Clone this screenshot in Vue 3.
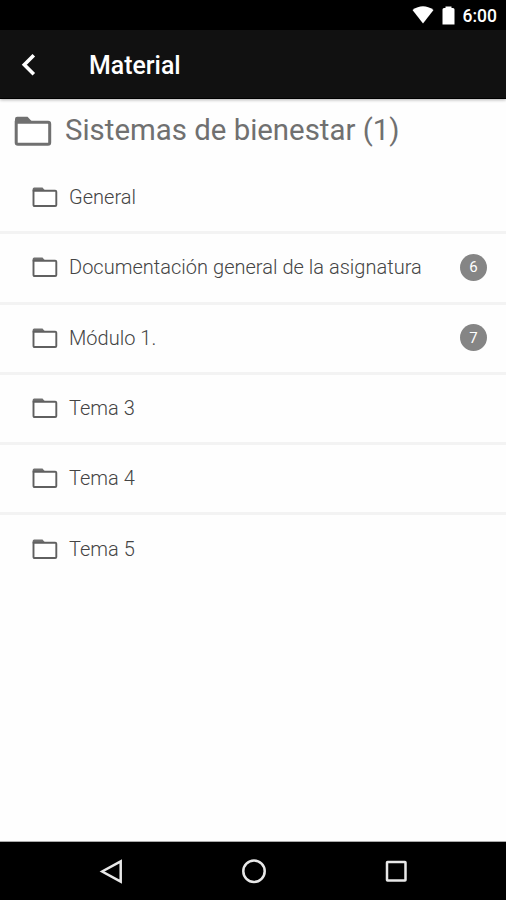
<script setup>
const rows = [
  { name: 'General' },
  { name: 'Documentación general de la asignatura', count: 6 },
  { name: 'Módulo 1.', count: 7 },
  { name: 'Tema 3' },
  { name: 'Tema 4' },
  { name: 'Tema 5' },
]
</script>

<template>
  <div class="screen">
    <div class="status">
      <svg class="wifi" viewBox="0 0 22 18"><path d="M0.5 4Q11 -3.5 21.5 4L11 17.5Z" /></svg>
      <svg class="battery" viewBox="0 0 13 19"><path d="M3.5 0.5h6v1.5h1.5q1.500 0 1.500 1.500V18.500H.5V3.500Q.5 2 2 2h1.500z" /></svg>
      <span class="time">6:00</span>
    </div>
    <header class="bar">
      <svg class="back" viewBox="0 0 16 24"><path d="M13.800 2.200L4.300 11.700L13.800 21.200" /></svg>
      <h1>Material</h1>
    </header>
    <main class="content">
      <div class="course">
        <svg class="folder-lg" viewBox="0 0 38 31"><path class="tab" d="M1 8V3Q1 .8 3.200.8H13.500L18 5.500V8z" /><path class="box" d="M2.200 6.200H34Q35.700 6.200 35.700 7.900V26.500Q35.700 28.200 34 28.200H4Q2.200 28.200 2.200 26.500z" /></svg>
        <h2>Sistemas de bienestar (1)</h2>
      </div>
      <ul class="list">
        <li v-for="row in rows" :key="row.name">
          <svg class="folder" viewBox="0 0 26 21"><path class="tab" d="M.7 4.500V2Q.7.500 2.200.500H10.500L12.200 2.500V4.500z" /><path class="box" d="M1.500 3.700H23.200Q24.300 3.700 24.300 4.800V17.900Q24.300 19 23.200 19H2.600Q1.500 19 1.500 17.900z" /></svg>
          <span class="name">{{ row.name }}</span>
          <span v-if="row.count" class="badge">{{ row.count }}</span>
        </li>
      </ul>
    </main>
    <nav class="nav">
      <svg viewBox="0 0 26 26"><path d="M22.700 3.400V23.600L4.200 13.500z" /></svg>
      <svg viewBox="0 0 26 26"><circle cx="13" cy="13.200" r="10.700" /></svg>
      <svg viewBox="0 0 26 26"><rect x="4" y="4" width="18.500" height="18.500" rx="0.500" /></svg>
    </nav>
  </div>
</template>

<style>
body { background: #fff; }
</style>

<style scoped>
.screen { display: flex; flex-direction: column; width: 506px; height: 900px; overflow: hidden; background: #fefefe; font-family: Roboto, "Liberation Sans", sans-serif; color: #666; }
.status { display: flex; align-items: center; justify-content: flex-end; flex: none; height: 30px; padding-right: 9px; box-sizing: border-box; background: #000; color: #fff; }
.wifi { width: 22px; height: 18px; fill: #fff; margin-right: 8px; }
.battery { width: 13px; height: 19px; fill: #fff; margin-right: 8px; }
.time { font-size: 17.500px; line-height: 20px; font-weight: 500; padding-top: 2px; }
.bar { display: flex; align-items: center; flex: none; height: 69px; padding: 1px 0 0 20px; box-sizing: border-box; background: #111; border-bottom: 1px solid #000; box-shadow: 0 1px 3px rgba(0, 0, 0, 0.3); color: #fff; }
.back { width: 16px; height: 24px; fill: none; stroke: #fff; stroke-width: 3.600; }
h1 { margin: 3px 0 0 53px; font-size: 24.900px; line-height: 30px; font-weight: 500; }
.content { flex: 1; min-height: 0; border-bottom: 1px solid #aaa; }
.course { display: flex; align-items: center; height: 65px; padding: 0 0 1px 14px; box-sizing: border-box; }
.folder-lg { width: 38px; height: 31px; margin-right: 13px; }
h2 { margin: 0 0 3px; font-size: 29.400px; line-height: 36px; font-weight: 400; white-space: nowrap; color: #707070; }
.tab { fill: #707070; }
.box { fill: #fff; stroke: #707070; stroke-width: 3; }
.folder .box { stroke-width: 1.900; stroke: #606060; }
.list { margin: 0; padding: 0; list-style: none; }
li { display: flex; align-items: center; height: 70.300px; padding: 0 19px 1px 32px; box-sizing: border-box; border-bottom: 3px solid #f3f3f3; }
li:last-child { border-bottom-color: transparent; }
.folder { width: 26px; height: 21px; margin: 1px 11px 0 0; }
.name { font-size: 20px; line-height: 26px; white-space: nowrap; font-weight: 300; color: #444; letter-spacing: 0.020px; }
.badge { display: flex; align-items: center; justify-content: center; width: 27px; height: 27px; margin-left: auto; border-radius: 50%; background: #858585; color: #fff; font-size: 15px; }
.nav { display: flex; align-items: center; justify-content: space-between; flex: none; height: 58px; padding: 0 97px 0 98px; box-sizing: border-box; background: #000; }
.nav svg { width: 26px; height: 26px; fill: none; stroke: #e8e8e8; stroke-width: 2.500; }
</style>
